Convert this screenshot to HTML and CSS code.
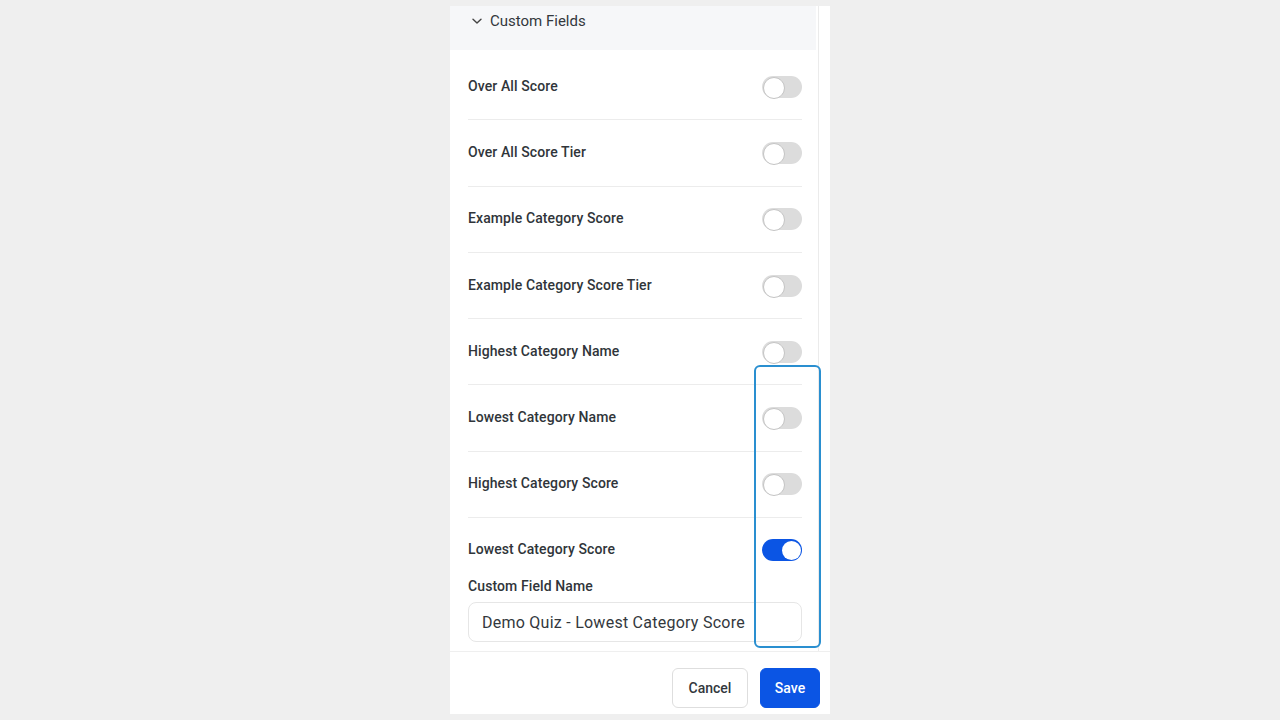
FILE: index.html
```html
<!DOCTYPE html>
<html lang="en">
<head>
<meta charset="utf-8">
<title>Custom Fields</title>
<link rel="stylesheet" href="styles.css">
</head>
<body>
<div class="page">
  <div class="panel">
    <div class="scroll">
      <div class="content">
        <div class="section-head">
          <svg class="chev" width="12" height="12" viewBox="0 0 12 12"><path d="M2 4.2 L6 8 L10 4.2" fill="none" stroke="#444" stroke-width="1.4" stroke-linecap="round" stroke-linejoin="round"/></svg>
          <span>Custom Fields</span>
        </div>
        <div class="rows">
          <div class="row"><span class="label">Over All Score</span><span class="toggle"></span></div>
          <div class="row"><span class="label">Over All Score Tier</span><span class="toggle"></span></div>
          <div class="row"><span class="label">Example Category Score</span><span class="toggle"></span></div>
          <div class="row"><span class="label">Example Category Score Tier</span><span class="toggle"></span></div>
          <div class="row"><span class="label">Highest Category Name</span><span class="toggle"></span></div>
          <div class="row"><span class="label">Lowest Category Name</span><span class="toggle"></span></div>
          <div class="row"><span class="label">Highest Category Score</span><span class="toggle"></span></div>
          <div class="row-open">
            <div class="row-top"><span class="label">Lowest Category Score</span><span class="toggle on"></span></div>
            <div class="field-label">Custom Field Name</div>
            <div class="input">Demo Quiz - Lowest Category Score</div>
          </div>
        </div>
      </div>
      <div class="scrollbar"></div>
    </div>
    <div class="footer">
      <button class="btn cancel">Cancel</button>
      <button class="btn save">Save</button>
    </div>
    <div class="highlight"></div>
  </div>
</div>
</body>
</html>
```

FILE: styles.css
```css
* { box-sizing: border-box; }
html, body { margin: 0; padding: 0; }
body {
  background: #efefef;
  font-family: Roboto, "Liberation Sans", Arial, sans-serif;
  color: #2e3338;
  width: 1280px;
  height: 720px;
  overflow: hidden;
}
.page {
  display: flex;
  justify-content: center;
  padding-top: 6px;
}
.panel {
  position: relative;
  width: 380px;
  height: 708px;
  background: #fff;
  display: flex;
  flex-direction: column;
}
.scroll {
  display: flex;
  height: 645px;
  overflow: hidden;
}
.content {
  width: 368px;
  flex: none;
}
.scrollbar {
  flex: 1;
  border-left: 1px solid #ebebeb;
  background: #fff;
}
.section-head {
  height: 44px;
  background: #f6f7f9;
  display: flex;
  align-items: flex-start;
  padding: 6px 0 0 21px;
  gap: 7px;
  font-size: 15px;
  font-weight: 400;
  color: #33383d;
  margin-right: 2px;
}
.section-head .chev { margin-top: 3px; }
.rows {
  padding: 4px 16px 0 18px;
}
.row {
  height: 66.3px;
  border-bottom: 1px solid #ececec;
  display: flex;
  align-items: center;
  justify-content: space-between;
}
.label {
  font-size: 14px;
  font-weight: 500;
  color: #30353a;
  letter-spacing: 0.1px;
  margin-bottom: 2px;
}
.toggle {
  position: relative;
  width: 40px;
  height: 22px;
  border-radius: 11px;
  background: #dcdcdc;
  flex: none;
}
.toggle::after {
  content: "";
  position: absolute;
  left: 1px;
  top: 1px;
  width: 20px;
  height: 20px;
  border-radius: 50%;
  background: #fff;
  border: 1px solid #c4c4c4;
}
.toggle.on { background: #0b55e4; }
.toggle.on::after {
  left: 20px;
  width: 19px;
  height: 19px;
  top: 1.5px;
  border: none;
}
.row-open {
  padding-bottom: 7px;
}
.row-top {
  height: 64px;
  display: flex;
  align-items: center;
  justify-content: space-between;
}
.field-label {
  font-size: 14px;
  font-weight: 500;
  color: #30353a;
  letter-spacing: 0.1px;
  height: 20px;
  line-height: 20px;
  margin-top: -6px;
}
.input {
  margin-top: 6px;
  height: 40px;
  border: 1px solid #e6e6e6;
  border-radius: 8px;
  padding: 0 13px;
  display: flex;
  align-items: center;
  font-size: 16px;
  color: #33383d;
  letter-spacing: 0.25px;
}
.footer {
  height: 63px;
  border-top: 1px solid #efefef;
  display: flex;
  justify-content: flex-end;
  align-items: flex-start;
  gap: 12px;
  padding: 16px 10px 0 0;
}
.btn {
  height: 40px;
  border-radius: 6px;
  font-family: Roboto, "Liberation Sans", Arial, sans-serif;
  font-size: 14px;
  font-weight: 500;
  cursor: pointer;
}
.cancel {
  width: 76px;
  background: #fff;
  border: 1px solid #dedede;
  color: #33383d;
}
.save {
  width: 60px;
  background: #0b55e4;
  border: 1px solid #0b55e4;
  color: #fff;
}
.highlight {
  position: absolute;
  left: 304px;
  top: 359px;
  width: 67px;
  height: 283px;
  border: 2px solid #2a8fd0;
  border-radius: 6px;
  pointer-events: none;
}
```
